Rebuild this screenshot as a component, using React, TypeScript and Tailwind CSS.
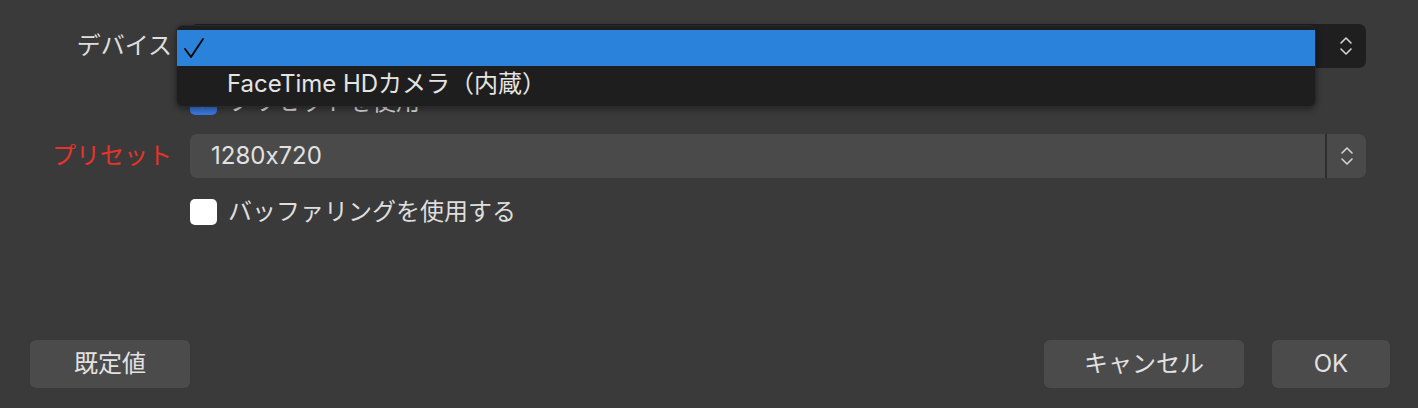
import React from "react";

const font = { fontFamily: 'Inter, "Noto Sans CJK JP", "Noto Sans", sans-serif' };

function Chevrons() {
  return (
    <svg width="14" height="24" viewBox="0 0 14 24" fill="none" stroke="#d4d4d4" strokeWidth="1.6" strokeLinecap="round" strokeLinejoin="round">
      <path d="M2 9 L7 4 L12 9" />
      <path d="M2 15 L7 20 L12 15" />
    </svg>
  );
}

function Check() {
  return (
    <svg width="22" height="24" viewBox="0 0 22 24" fill="none" stroke="#000" strokeWidth="1.8" strokeLinecap="round" strokeLinejoin="round">
      <path d="M2 13 L8 21 L20 3" />
    </svg>
  );
}

function Checkbox({ checked, label }: { checked: boolean; label: string }) {
  return (
    <div className="flex h-[26px] items-center gap-[11px]">
      {checked ? (
        <div className="flex h-[26px] w-[27px] items-center justify-center rounded-[5px] bg-[#3877df]">
          <svg width="14" height="12" viewBox="0 0 14 12" fill="none" stroke="#fff" strokeWidth="2.4" strokeLinecap="round" strokeLinejoin="round">
            <path d="M2 6 L5.5 10 L12 2" />
          </svg>
        </div>
      ) : (
        <div className="h-[26px] w-[27px] rounded-[5px] bg-white" />
      )}
      <span className="text-[24px] leading-[26px] text-[#dedede]">{label}</span>
    </div>
  );
}

function Row({ label, red, children }: { label: string; red?: boolean; children: React.ReactNode }) {
  return (
    <div className="flex h-[44px] items-center">
      <div className={`w-[172px] shrink-0 text-right text-[24px] leading-[44px] ${red ? "text-[#e8322a]" : "text-[#dedede]"}`}>{label}</div>
      <div className="ml-[18px] flex-1">{children}</div>
    </div>
  );
}

function Button({ children, className }: { children: React.ReactNode; className: string }) {
  return (
    <button className={`flex h-[48px] items-center justify-center rounded-[6px] bg-[#4b4b4b] text-[24px] text-[#e2e2e2] ${className}`}>
      {children}
    </button>
  );
}

export default function App() {
  return (
    <div className="relative flex h-[408px] w-full flex-col bg-[#3a3a3a] [font-feature-settings:'calt'_0]" style={font}>
      <div className="flex flex-col pr-[52px] pt-[24px]">
        <Row label="デバイス">
          <div className="flex h-[44px] items-center justify-end rounded-[7px] bg-[#1f1f1f] pr-[13px]">
            <Chevrons />
          </div>
        </Row>
        <div className="ml-[190px] mt-[21px]">
          <Checkbox checked label="プリセットを使用" />
        </div>
        <div className="mt-[19px]">
          <Row label="プリセット" red>
            <div className="flex h-[44px] items-stretch rounded-[7px] bg-[#4a4a4a]">
              <div className="flex flex-1 items-center pl-[21px] text-[24px] text-[#e2e2e2]">1280x720</div>
              <div className="w-[2px] bg-[#2e2e2e]" />
              <div className="flex w-[39px] items-center justify-center">
                <Chevrons />
              </div>
            </div>
          </Row>
        </div>
        <div className="ml-[190px] mt-[21px]">
          <Checkbox checked={false} label="バッファリングを使用する" />
        </div>
      </div>
      <div className="mt-auto flex items-center px-[28px] pb-[20px]">
        <Button className="ml-[2px] w-[160px]">既定値</Button>
        <div className="flex-1" />
        <Button className="w-[200px]">キャンセル</Button>
        <Button className="ml-[28px] w-[118px]">OK</Button>
      </div>

      <div className="absolute left-[176px] top-[25px] w-[1140px] rounded-[7px] border border-[#2a2a2a] bg-[#1e1e1e] py-[4px] shadow-[0_2px_6px_rgba(0,0,0,0.45)]">
        <div className="flex h-[36px] items-center bg-[#2a82da] pl-[6px]">
          <Check />
        </div>
        <div className="flex h-[36px] items-center pl-[50px] text-[24px] text-[#e4e4e4]">FaceTime HDカメラ（内蔵）</div>
      </div>
    </div>
  );
}
